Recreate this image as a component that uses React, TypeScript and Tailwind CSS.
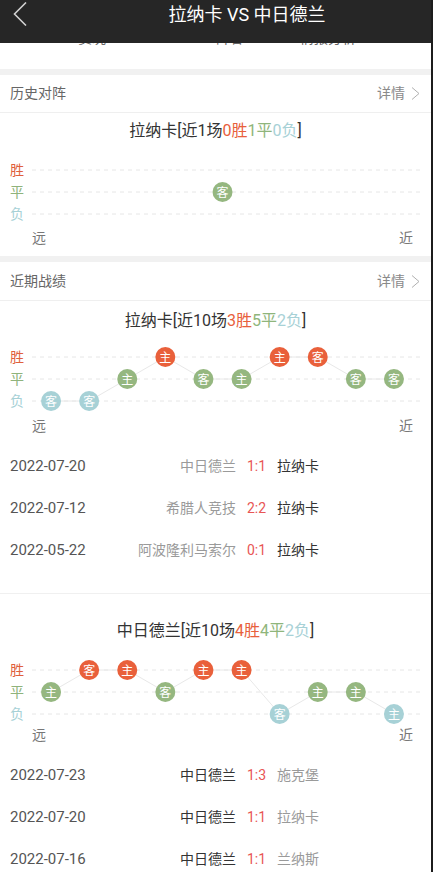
import React from "react";

type R = "w" | "d" | "l";
type Game = { r: R; h: boolean };

const COLORS: Record<R, string> = { w: "#e9603b", d: "#95b780", l: "#a7d1d6" };

function Chart({ games }: { games: Game[] }) {
  const n = games.length;
  const slot = 381 / n;
  const yOf = (r: R) => (r === "w" ? 11 : r === "d" ? 33 : 55);
  const pts = games.map((g, i) => ({ x: slot * (i + 0.5), y: yOf(g.r), g }));
  return (
    <div className="flex h-[66px]">
      <div className="flex w-[32px] flex-col pl-[10px] text-[14px]">
        <div className="h-[22px] leading-[22px] text-[#e0603c]">胜</div>
        <div className="h-[22px] leading-[22px] text-[#8fb37b]">平</div>
        <div className="h-[22px] leading-[22px] text-[#a7d1d6]">负</div>
      </div>
      <svg width="399" height="66" className="block">
        {[11, 33, 55].map((y) => (
          <line key={y} x1="0" x2="389" y1={y} y2={y} stroke="#e6e6e6" strokeWidth="1" strokeDasharray="4 4" />
        ))}
        {pts.slice(1).map((p, i) => (
          <line key={i} x1={pts[i].x} y1={pts[i].y} x2={p.x} y2={p.y} stroke="#e8e8e8" strokeWidth="1" />
        ))}
        {pts.map((p, i) => (
          <g key={i}>
            <circle cx={p.x} cy={p.y} r="10" fill={COLORS[p.g.r]} />
            <text
              x={p.x}
              y={p.y + 0.5}
              textAnchor="middle"
              dominantBaseline="central"
              fill="#ffffff"
              fontSize="12"
            >
              {p.g.h ? "主" : "客"}
            </text>
          </g>
        ))}
      </svg>
    </div>
  );
}

function FarNear({ className = "" }: { className?: string }) {
  return (
    <div className={`flex h-[20px] items-center justify-between pl-[32px] pr-[18px] text-[14px] text-[#777] ${className}`}>
      <span>远</span>
      <span>近</span>
    </div>
  );
}

function SectionHeader({ title, h }: { title: string; h: string }) {
  return (
    <div className={`flex ${h} items-center justify-between border-b border-[#efefef] pl-[10px] pr-[11px]`}>
      <span className="text-[14px] text-[#666]">{title}</span>
      <span className="flex items-center gap-[6px] text-[14px] text-[#8a8a8a]">
        详情
        <svg width="9" height="13" viewBox="0 0 9 13">
          <polyline points="1,0.5 8,6.5 1,12.5" fill="none" stroke="#b0b0b0" strokeWidth="1" />
        </svg>
      </span>
    </div>
  );
}

function TitleLine({ team, total, w, d, l }: { team: string; total: number; w: number; d: number; l: number }) {
  return (
    <div className="text-center text-[16px] leading-[22px] text-[#333]">
      {team}[近{total}场<span className="text-[#e8603c]">{w}胜</span>
      <span className="text-[#8fb57b]">{d}平</span>
      <span className="text-[#a7d1d6]">{l}负</span>]
    </div>
  );
}

type Match = { date: string; home: string; score: string; away: string; focusHome: boolean };

function MatchRow({ m }: { m: Match }) {
  return (
    <div className="flex h-[42px] items-center pl-[10px] text-[14px]">
      <span className="w-[120px] text-[15px] text-[#555]">{m.date}</span>
      <span className={`w-[106px] text-right ${m.focusHome ? "text-[#333]" : "text-[#9a9a9a]"}`}>{m.home}</span>
      <span className="w-[41px] text-center text-[#e85555]">{m.score}</span>
      <span className={m.focusHome ? "text-[#9a9a9a]" : "text-[#333]"}>{m.away}</span>
    </div>
  );
}

const team1Games: Game[] = [
  { r: "l", h: false },
  { r: "l", h: false },
  { r: "d", h: true },
  { r: "w", h: true },
  { r: "d", h: false },
  { r: "d", h: true },
  { r: "w", h: true },
  { r: "w", h: false },
  { r: "d", h: false },
  { r: "d", h: false },
];

const team2Games: Game[] = [
  { r: "d", h: true },
  { r: "w", h: false },
  { r: "w", h: true },
  { r: "d", h: false },
  { r: "w", h: true },
  { r: "w", h: true },
  { r: "l", h: false },
  { r: "d", h: true },
  { r: "d", h: true },
  { r: "l", h: true },
];

const team1Matches: Match[] = [
  { date: "2022-07-20", home: "中日德兰", score: "1:1", away: "拉纳卡", focusHome: false },
  { date: "2022-07-12", home: "希腊人竞技", score: "2:2", away: "拉纳卡", focusHome: false },
  { date: "2022-05-22", home: "阿波隆利马索尔", score: "0:1", away: "拉纳卡", focusHome: false },
];

const team2Matches: Match[] = [
  { date: "2022-07-23", home: "中日德兰", score: "1:3", away: "施克堡", focusHome: true },
  { date: "2022-07-20", home: "中日德兰", score: "1:1", away: "拉纳卡", focusHome: true },
  { date: "2022-07-16", home: "中日德兰", score: "1:1", away: "兰纳斯", focusHome: true },
];

export default function App() {
  return (
    <div
      className="h-[872px] w-[433px] overflow-hidden border-r-[2px] border-[#1c1c1c] bg-white"
      style={{ fontFamily: 'Roboto, "Noto Sans CJK SC", sans-serif' }}
    >
      {/* header */}
      <div className="flex h-[43px] bg-[#262626]">
        <div className="w-[63px] pl-[13px] pt-[2px]">
          <svg width="14" height="24" viewBox="0 0 14 24">
            <polyline points="13,0.5 1.5,12 13,23.5" fill="none" stroke="#d0d0d0" strokeWidth="1.6" />
          </svg>
        </div>
        <div className="flex flex-1 justify-center pt-[3px] text-[18px] leading-[24px] text-white">拉纳卡 VS 中日德兰</div>
      </div>

      {/* tabs, scrolled mostly under the header */}
      <div className="h-[26px] overflow-hidden">
        <div className="-mt-[14px] flex text-[14px] leading-[18px] text-[#666]">
          <span className="ml-[78px]">赛况</span>
          <span className="ml-[110px]">阵容</span>
          <span className="ml-[56px]">情报分析</span>
        </div>
      </div>

      <div className="h-[6px] bg-[#f1f1f1]" />

      {/* 历史对阵 */}
      <SectionHeader title="历史对阵" h="h-[38px]" />
      <div className="flex h-[36px] items-center justify-center">
        <TitleLine team="拉纳卡" total={1} w={0} d={1} l={0} />
      </div>
      <div className="pt-[10px]">
        <Chart games={[{ r: "d", h: false }]} />
      </div>
      <FarNear className="mt-[3px]" />
      <div className="h-[8px]" />

      <div className="h-[6px] bg-[#f1f1f1]" />

      {/* 近期战绩 */}
      <SectionHeader title="近期战绩" h="h-[39px]" />
      <div className="flex h-[39px] items-center justify-center">
        <TitleLine team="拉纳卡" total={10} w={3} d={5} l={2} />
      </div>
      <div className="pt-[6px]">
        <Chart games={team1Games} />
      </div>
      <FarNear className="mt-[4px]" />
      <div className="mt-[9px]">
        {team1Matches.map((m) => (
          <MatchRow key={m.date + m.home} m={m} />
        ))}
      </div>
      <div className="h-[23px] border-b border-[#f0f0f0]" />

      <div className="pt-[26px]">
        <TitleLine team="中日德兰" total={10} w={4} d={4} l={2} />
      </div>
      <div className="pt-[17px]">
        <Chart games={team2Games} />
      </div>
      <FarNear />
      <div className="mt-[9px]">
        {team2Matches.map((m) => (
          <MatchRow key={m.date + m.away} m={m} />
        ))}
      </div>
    </div>
  );
}
